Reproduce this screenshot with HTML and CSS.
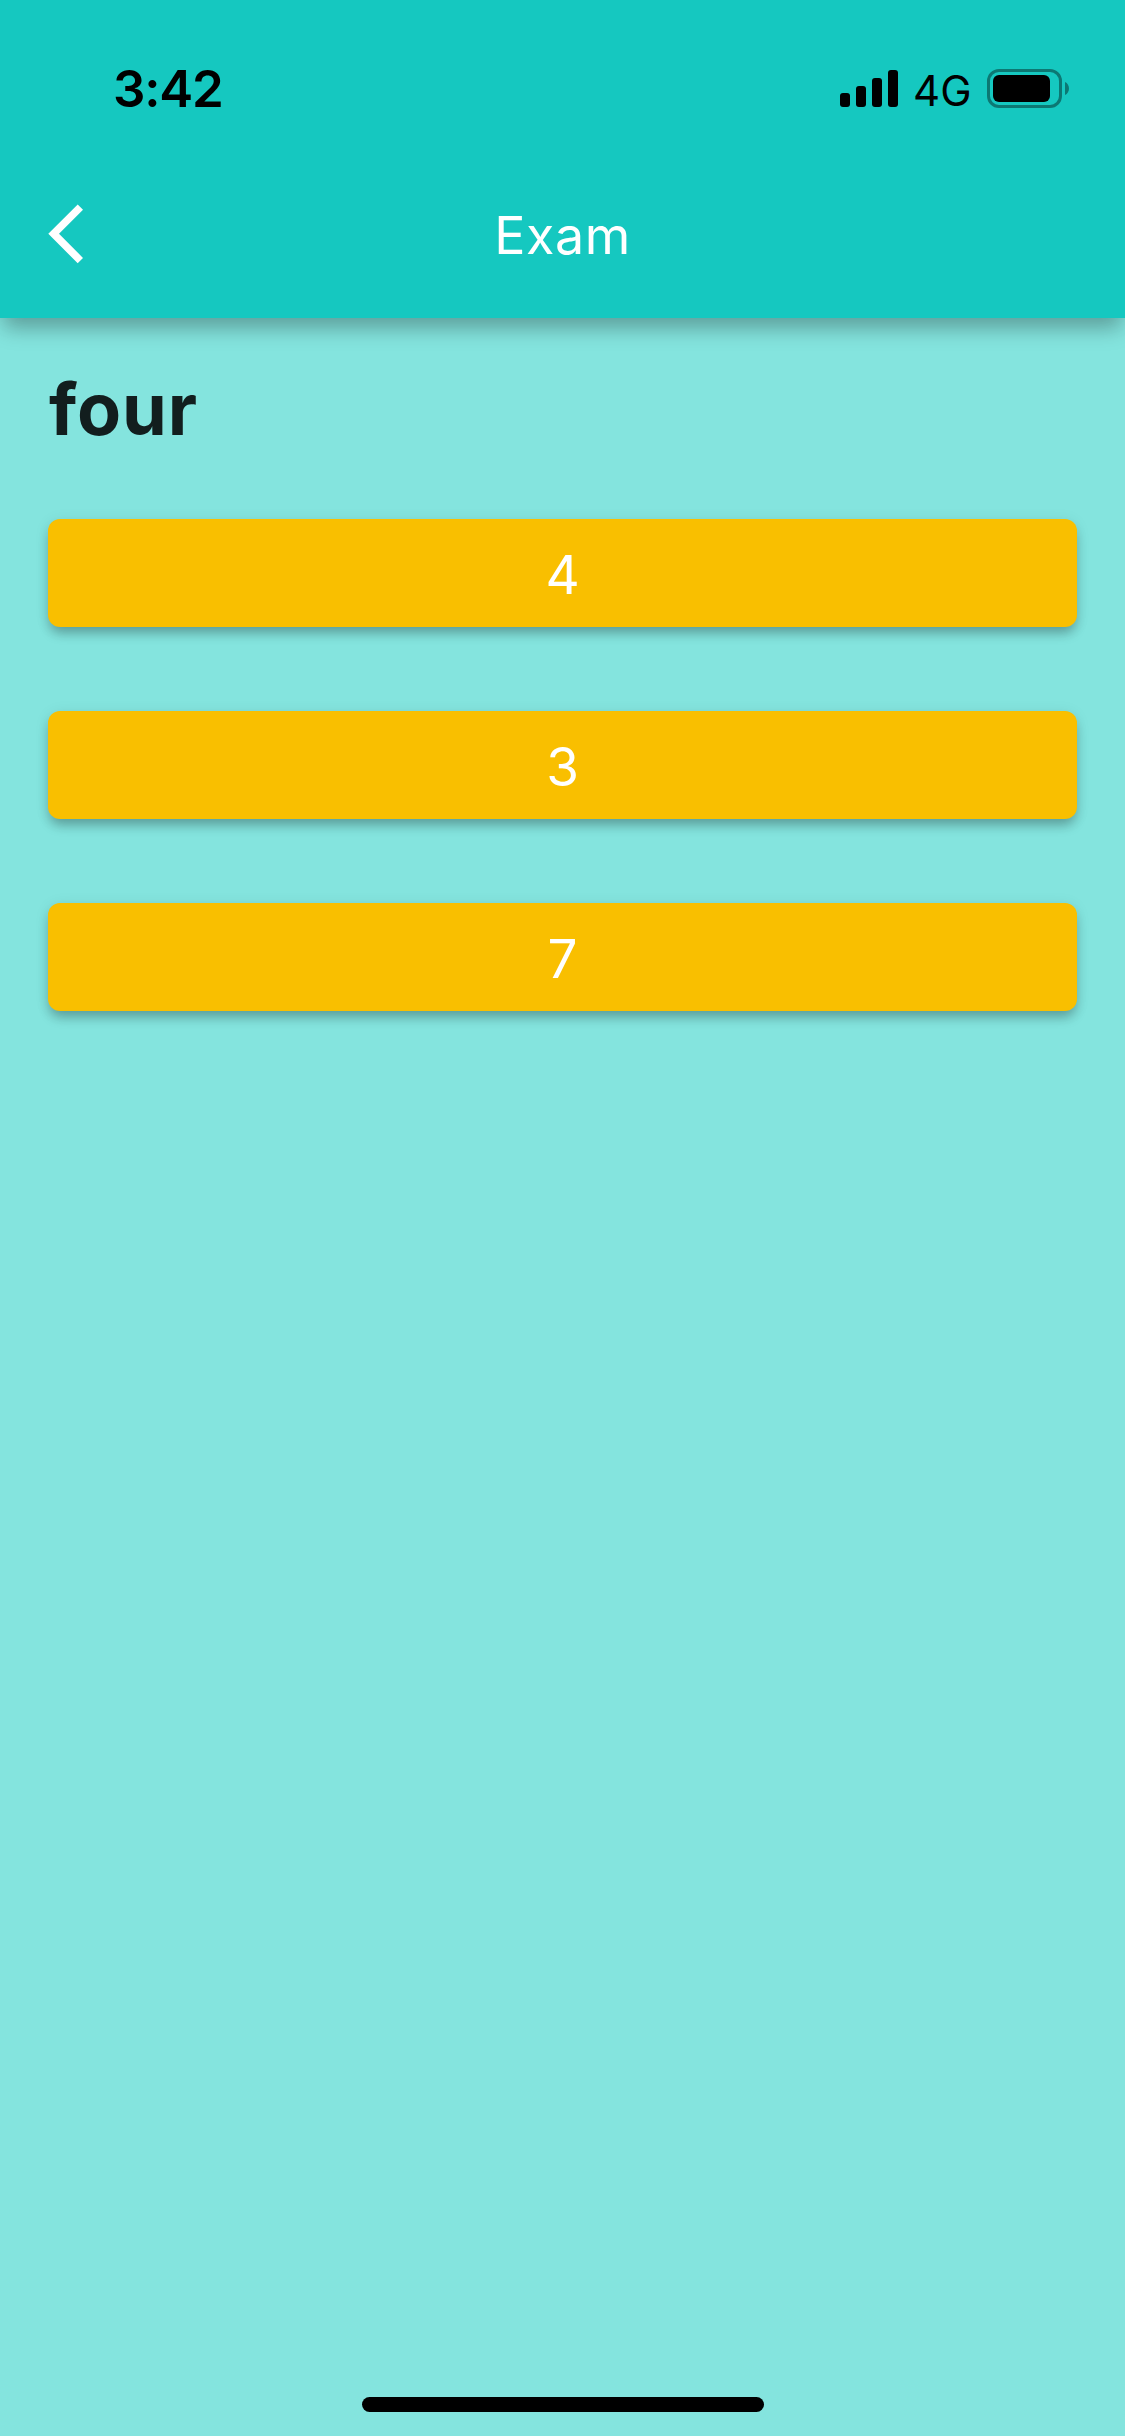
FILE: index.html
```html
<!DOCTYPE html>
<html lang="en">
<head>
<meta charset="utf-8">
<title>Exam</title>
<link rel="stylesheet" href="styles.css">
</head>
<body>
<div class="screen">
  <header class="app-bar">
    <div class="status">
      <span class="time">3:42</span>
      <div class="indicators">
        <svg class="signal" width="58" height="37" viewBox="0 0 58 37">
          <rect x="0" y="23" width="10" height="14" rx="3"/>
          <rect x="16" y="16" width="10" height="21" rx="3"/>
          <rect x="32" y="8" width="10" height="29" rx="3"/>
          <rect x="48" y="0" width="10" height="37" rx="3"/>
        </svg>
        <span class="network">4G</span>
        <svg class="battery" width="82" height="39" viewBox="0 0 82 39">
          <rect x="1.5" y="1.5" width="72" height="36" rx="10.5" fill="none" stroke="#000" stroke-opacity=".4" stroke-width="3"/>
          <rect x="6" y="6" width="57" height="27" rx="6"/>
          <path d="M78 13c5.300 2.200 5.300 10.800 0 13z" fill-opacity=".4"/>
        </svg>
      </div>
    </div>
    <nav class="toolbar">
      <svg class="back" width="35" height="60" viewBox="0 0 35 60"><path d="M29.700 .400 35 5.700 11 29.700 35 53.900 29.700 59.300.300 29.700z" fill="#fff"/></svg>
      <h1 class="title">Exam</h1>
    </nav>
  </header>
  <main class="content">
    <h2 class="question">four</h2>
    <div class="answers">
      <button class="answer">4</button>
      <button class="answer">3</button>
      <button class="answer">7</button>
    </div>
  </main>
  <div class="home-indicator"></div>
</div>
</body>
</html>
```
FILE: styles.css
```css
* { box-sizing: border-box; margin: 0; }
body { font-family: Inter, "Liberation Sans", sans-serif; background: #84e4de; }
.screen { width: 1125px; height: 2436px; display: flex; flex-direction: column; background: #84e4de; overflow: hidden; }
.app-bar {
  height: 318px;
  background: #15c8c0;
  box-shadow: 0 14px 20px -4px rgba(0,0,0,.27), 0 3px 24px 0 rgba(0,0,0,.06);
}
.status { height: 150px; padding: 58px 56px 0 113px; display: flex; justify-content: space-between; }
.time { font-size: 51px; line-height: 61px; font-weight: 600; letter-spacing: -1.2px; }
.indicators { height: 61px; display: flex; align-items: center; }
.network { width: 89px; padding: 3px 0 0 15px; font-size: 42px; line-height: 61px; font-weight: 400; }
.toolbar { height: 168px; padding: 0 48px; display: grid; grid-template-columns: 35px 1fr 35px; align-items: center; }
.title { padding-top: 4px; color: #fff; font-size: 52px; line-height: 62px; font-weight: 400; letter-spacing: .5px; text-align: center; }
.content { flex: 1; padding: 48px; }
.question { margin-top: -1px; padding-left: 1px; font-size: 72px; line-height: 87px; font-weight: 700; letter-spacing: .9px; color: #121e1e; }
.answers { margin-top: 67px; display: flex; flex-direction: column; gap: 84px; }
.answer {
  height: 108px; padding: 3px 0 0; border: 0; border-radius: 12px;
  background: #f9bf00; color: #fff;
  font: 400 53px/62px Inter, "Liberation Sans", sans-serif;
  box-shadow: 0 8px 12px -2px rgba(0,0,0,.27), 0 2px 15px 0 rgba(0,0,0,.08);
}
.home-indicator { width: 402px; height: 15px; margin: 0 0 24px 362px; border-radius: 8px; background: #000; }
```
